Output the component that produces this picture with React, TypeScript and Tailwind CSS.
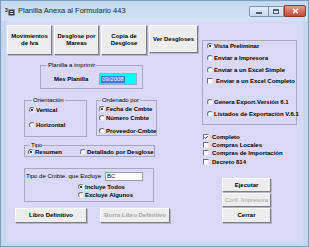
import React from 'react'

function Radio({ checked = false, label, bold = true }: { checked?: boolean; label: string; bold?: boolean }) {
  return (
    <div className="flex items-center h-[8px] gap-[1px]">
      <span className="w-[6px] h-[6px] rounded-full bg-white border border-t-[#6e6e7e] border-l-[#6e6e7e] border-r-[#e8e8f4] border-b-[#e8e8f4] flex items-center justify-center shrink-0">
        {checked && <span className="w-[2px] h-[2px] rounded-full bg-black" />}
      </span>
      <span className={`text-[6px] leading-[8px] whitespace-nowrap ${bold ? 'font-bold' : 'font-normal'}`}>{label}</span>
    </div>
  )
}

function Check({ checked = false, label }: { checked?: boolean; label: string }) {
  return (
    <div className="flex items-center h-[8px] gap-[3px]">
      <span className="w-[6px] h-[6px] bg-white border border-t-[#6e6e7e] border-l-[#6e6e7e] border-r-[#e8e8f4] border-b-[#e8e8f4] flex items-center justify-center shrink-0">
        {checked && (
          <svg width="5" height="5" viewBox="0 0 5 5">
            <path d="M0.5 2.4 L2 3.8 L4.5 0.8" fill="none" stroke="#000" strokeWidth="1" />
          </svg>
        )}
      </span>
      <span className="text-[6px] leading-[8px] font-bold whitespace-nowrap">{label}</span>
    </div>
  )
}

function Btn({ children, className = '', disabled = false }: { children: React.ReactNode; className?: string; disabled?: boolean }) {
  return (
    <button
      className={`flex items-center justify-center text-center font-bold text-[6px] leading-[7px] bg-[#ededed] border border-t-white border-l-white border-r-[#7d7d8a] border-b-[#7d7d8a] shadow-[1px_1px_0_#b4b4c8] ${disabled ? 'text-[#a4a4a4]' : 'text-black'} ${className}`}
    >
      {children}
    </button>
  )
}

export default function App() {
  return (
    <div className="w-[309px] h-[247px] bg-[#c4d8ef] border border-[#7f9bbd] flex flex-col overflow-hidden font-['Liberation_Sans',Arial,sans-serif] text-black">
      {/* Title bar */}
      <div className="h-[20px] flex items-center pl-[4px] bg-linear-to-b from-[#c2d7ef] to-[#d3e3f5]">
        <svg width="10" height="9" viewBox="0 0 10 9" className="shrink-0">
          <text x="0" y="4.5" fontSize="5" fontWeight="bold" fill="#1a1a1a" fontFamily="Liberation Sans, Arial, sans-serif">3</text>
          <rect x="3.5" y="2.5" width="6" height="6" fill="#3a3a48" />
          <rect x="5" y="4" width="3" height="1" fill="#d8d8e8" />
          <rect x="5" y="6" width="3" height="1" fill="#d8d8e8" />
        </svg>
        <span className="ml-[3px] text-[7.5px] leading-[10px] text-[#1e1e1e]">Planilla Anexa al Formulario 443</span>
        <div className="ml-auto mr-[2px] flex items-center">
          <div className="flex h-[11px] border border-[#7d94b3] rounded-l-[2px] bg-linear-to-b from-[#e6eef8] to-[#c9d9ee]">
            <div className="w-[19px] flex items-end justify-center pb-[2px] border-r border-[#7d94b3]">
              <span className="w-[6px] h-[2px] bg-[#4d5d74]" />
            </div>
            <div className="w-[14px] flex items-center justify-center">
              <span className="w-[6px] h-[5px] border border-[#4d5d74] border-t-2" />
            </div>
          </div>
          <div className="w-[22px] h-[12px] flex items-center justify-center border border-[#8c3a33] rounded-r-[2px] bg-linear-to-b from-[#e39a8a] to-[#c4483a]">
            <svg width="7" height="6" viewBox="0 0 7 6">
              <path d="M1 0.8 L6 5.2 M6 0.8 L1 5.2" stroke="#fff" strokeWidth="1.4" />
            </svg>
          </div>
        </div>
      </div>

      {/* Client area */}
      <div className="ml-[5px] w-[297px] h-[221px] bg-[#d9d9f7] flex">
        {/* Left column */}
        <div className="w-[196px] flex flex-col">
          <div className="mt-[4px] ml-[1px] flex items-start gap-[2px]">
            <Btn className="w-[45px] h-[30px]">Movimientos<br />de Iva</Btn>
            <Btn className="w-[45px] h-[30px]">Desglose por<br />Mareas</Btn>
            <Btn className="w-[46px] h-[30px]">Copia de<br />Desglose</Btn>
            <Btn className="w-[49px] h-[28px]">Ver Desgloses</Btn>
          </div>

          <fieldset className="mt-[7px] ml-[34px] w-[103px] h-[27px] border border-[#a7a7c2]">
            <legend className="ml-[6px] px-[1px] text-[6px] leading-[7px]">Planilla a imprimir</legend>
            <div className="mt-[4px] pl-[13px] flex items-center">
              <span className="w-[45px] text-[6px] font-bold leading-[8px]">Mes Planilla</span>
              <div className="w-[38px] h-[12px] bg-[#00ffff] border border-[#8fb0c8] flex items-center pl-[1px]">
                <span className="bg-[#3a7ccc] text-white text-[6px] leading-[7px] px-[1px]">09/2008</span>
              </div>
            </div>
          </fieldset>

          <div className="mt-[8px] flex items-start">
            <fieldset className="ml-[18px] w-[63px] h-[40px] border border-[#a7a7c2] pl-[4px]">
              <legend className="ml-[3px] px-[1px] text-[6px] leading-[7px]">Orientación</legend>
              <div className="mt-[1.5px]"><Radio checked label="Vertical" /></div>
              <div className="mt-[7px]"><Radio label="Horizontal" /></div>
            </fieldset>
            <fieldset className="ml-[9px] w-[61px] h-[39px] border border-[#a7a7c2] pl-[2px]">
              <legend className="ml-[2px] px-[1px] text-[6px] leading-[7px]">Ordenado por</legend>
              <div className="mt-[0.5px]"><Radio checked label="Fecha de Cmbte" /></div>
              <div className="mt-[1px]"><Radio label="Número Cmbte" /></div>
              <div className="mt-[5px]"><Radio label="Proveedor-Cmbte" /></div>
            </fieldset>
          </div>

          <fieldset className="mt-[5px] ml-[18px] w-[131px] h-[15px] border border-[#a7a7c2] pl-[3px]">
            <legend className="ml-[2px] px-[1px] text-[6px] leading-[7px]">Tipo</legend>
            <div className="-mt-[1px] flex items-center">
              <div className="w-[52px]"><Radio checked label="Resumen" /></div>
              <Radio label="Detallado por Desglose" />
            </div>
          </fieldset>

          <div className="mt-[11px] ml-[18px] w-[130px] h-[34px] border border-[#a7a7c2] flex flex-col">
            <div className="mt-[2px] pl-[1px] flex items-center h-[10px]">
              <span className="w-[79px] text-[6px] leading-[8px] whitespace-nowrap">Tipo de Cmbte. que Excluye</span>
              <div className="w-[38px] h-[9px] bg-white border border-[#9a9aae] flex items-center pl-[1px]">
                <span className="text-[6px] leading-[7px]">BC</span>
              </div>
            </div>
            <div className="mt-[2px] pl-[53px]"><Radio checked label="Incluye Todos" /></div>
            <div className="pl-[53px]"><Radio label="Excluye Algunos" /></div>
          </div>

          <div className="mt-[6px] ml-[9px] flex gap-[13px]">
            <Btn className="w-[72px] h-[15px]">Libro Definitivo</Btn>
            <Btn disabled className="w-[70px] h-[15px]">Borra Libro Definitivo</Btn>
          </div>
        </div>

        {/* Right column */}
        <div className="w-[101px] flex flex-col">
          <div className="mt-[19px] w-[95px] h-[85px] border border-[#a7a7c2] pl-[4px] flex flex-col">
            <div className="h-[10px] flex items-center"><Radio checked label="Vista Preliminar" /></div>
            <div className="mt-[2px] h-[10px] flex items-center"><Radio label="Enviar a Impresora" /></div>
            <div className="mt-[2px] h-[10px] flex items-center"><Radio label="Enviar a un Excel Simple" /></div>
            <div className="mt-[1px] h-[10px] flex items-center"><Check label="Enviar a un Excel Completo" /></div>
            <div className="mt-[11px] h-[10px] flex items-center"><Radio label="Genera Export.Versión 6.1" /></div>
            <div className="mt-[2px] h-[10px] flex items-center"><Radio label="Listados de Exportación V.6.1" /></div>
          </div>

          <div className="mt-[8px] ml-[1px] flex flex-col">
            <Check checked label="Completo" />
            <Check label="Compras Locales" />
            <Check label="Compras de Importación" />
            <div className="mt-[1px]"><Check label="Decreto 814" /></div>
          </div>

          <div className="mt-[12px] ml-[20px] flex flex-col gap-[1px]">
            <Btn className="w-[49px] h-[14px]">Ejecutar</Btn>
            <Btn disabled className="w-[49px] h-[14px] font-normal">Conf. Impresora</Btn>
            <Btn className="w-[49px] h-[15px]">Cerrar</Btn>
          </div>
        </div>
      </div>
    </div>
  )
}
